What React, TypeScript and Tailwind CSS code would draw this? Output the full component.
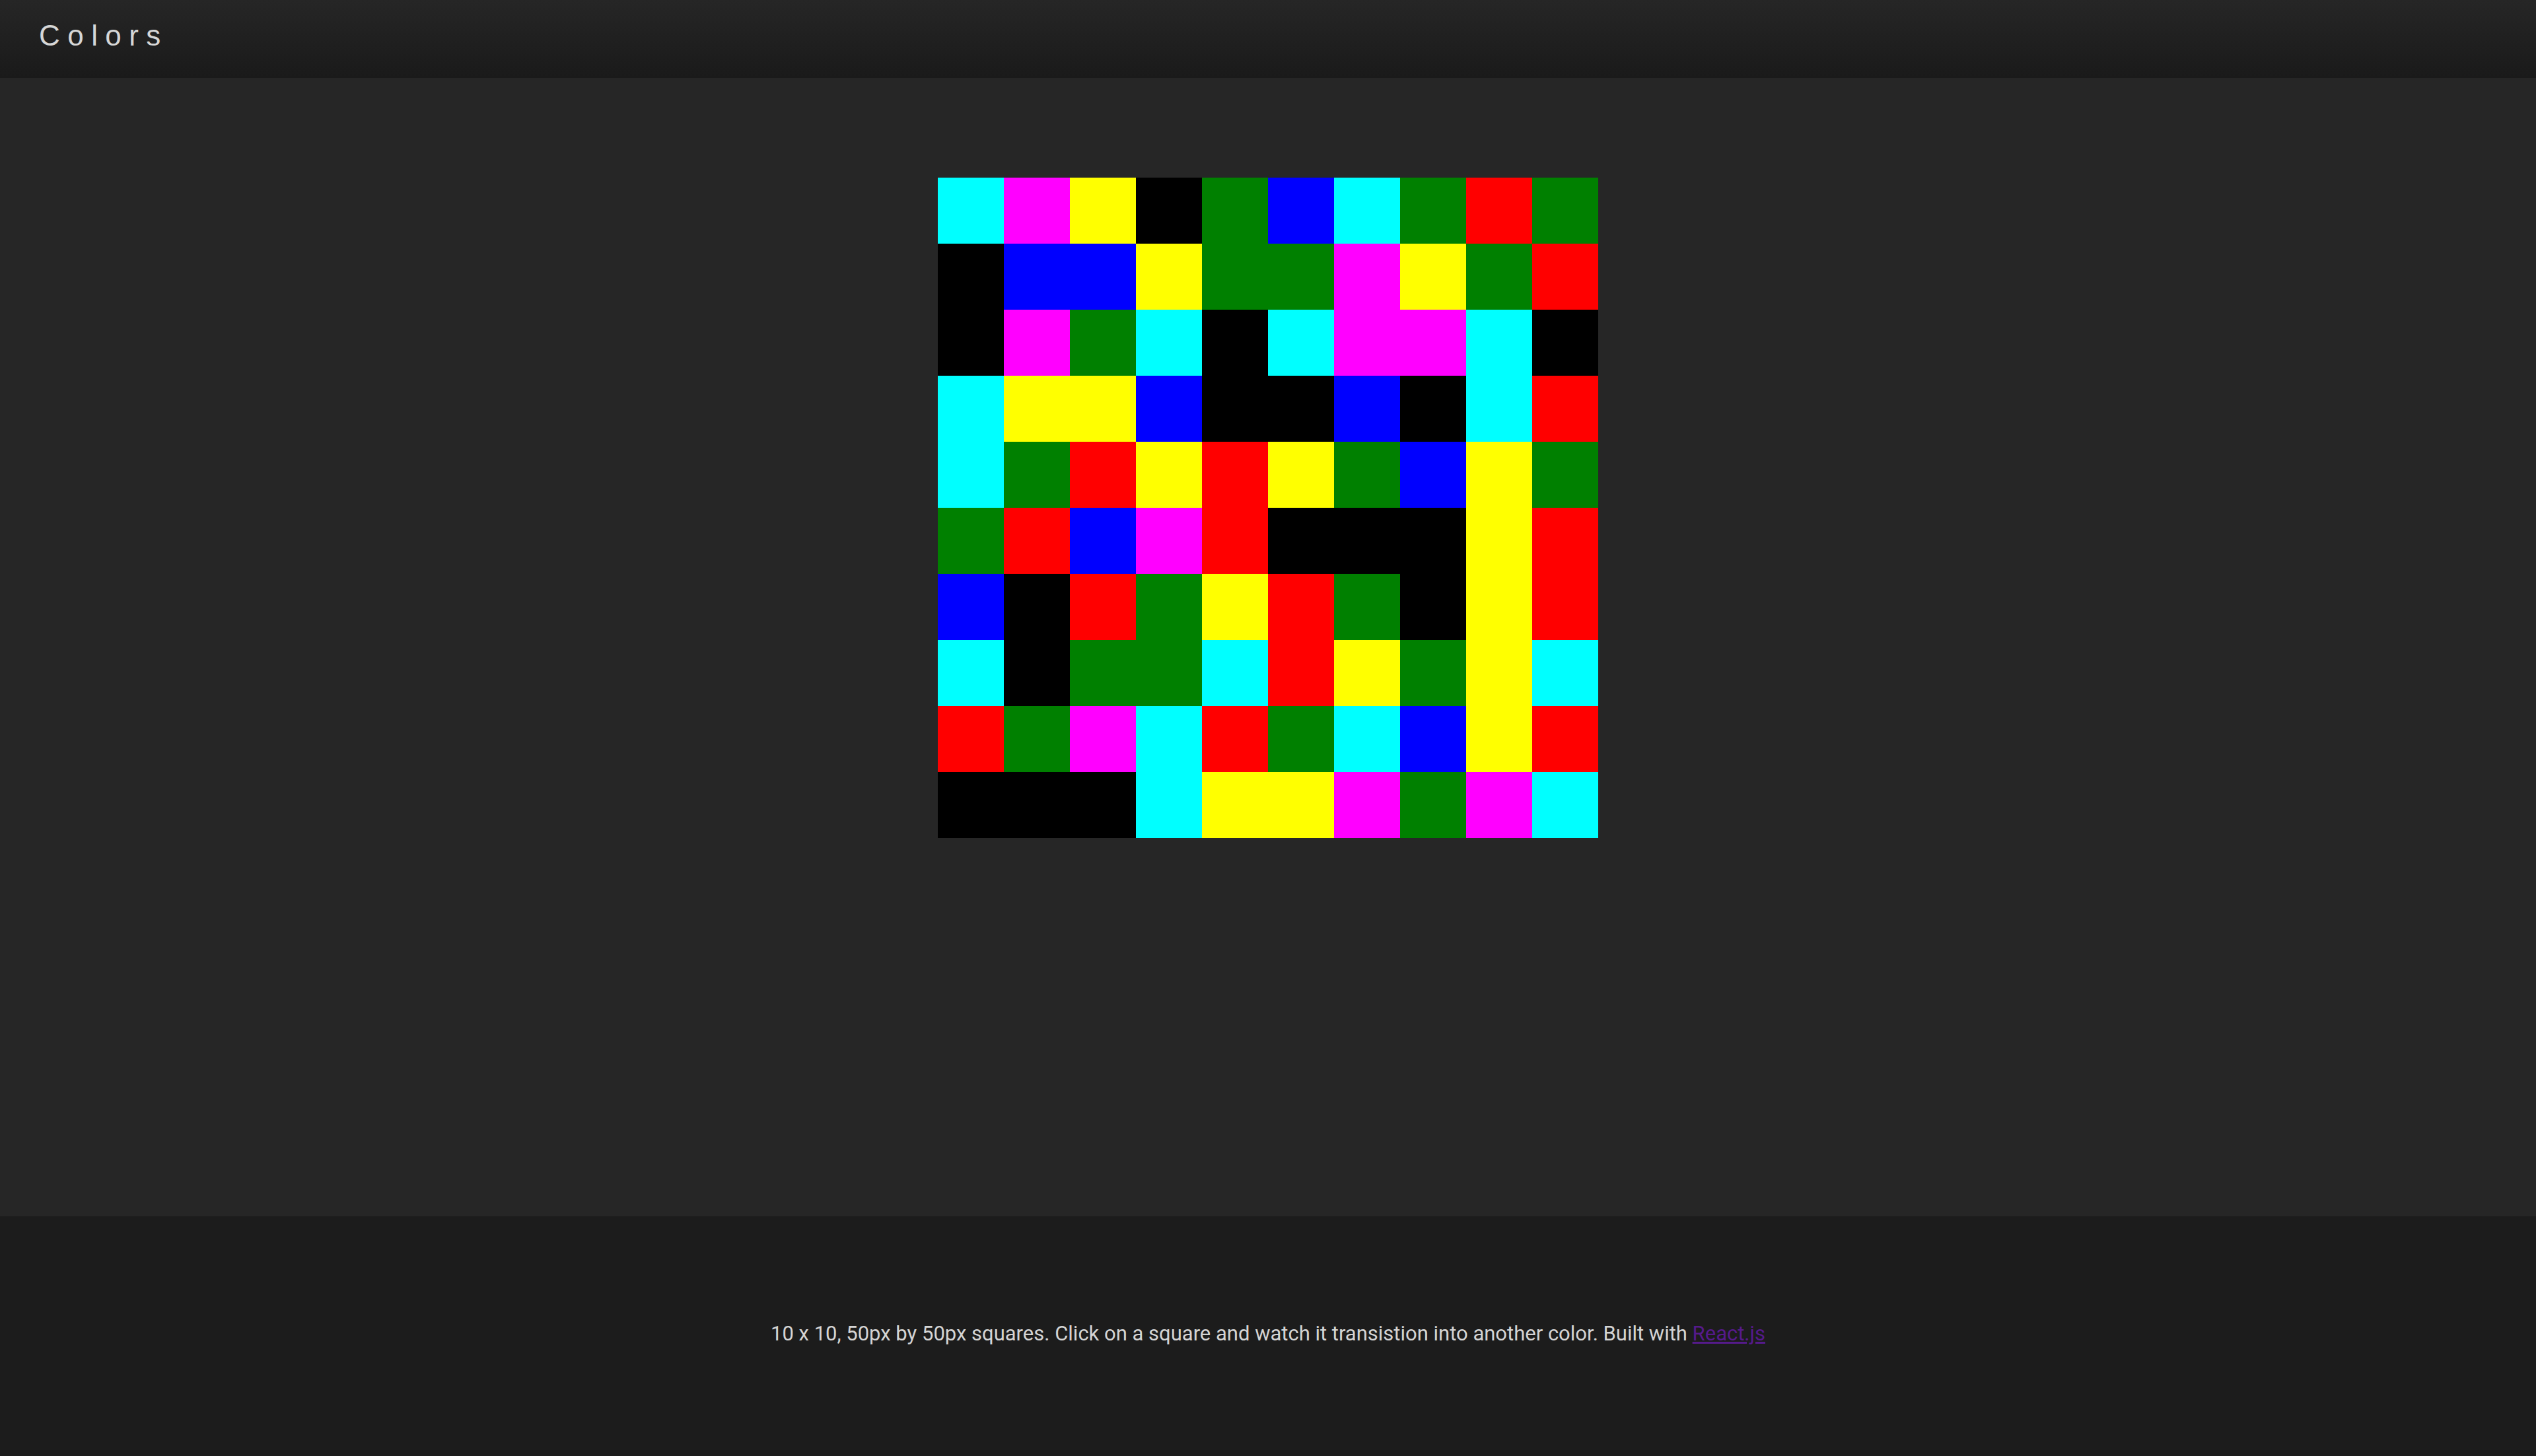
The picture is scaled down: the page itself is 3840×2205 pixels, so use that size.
import React from "react";

type Cell = "c" | "m" | "y" | "k" | "g" | "b" | "r";

const rows: string[] = [
  "cmykgbcgrg",
  "kbbyggmygr",
  "kmgckcmmck",
  "cyybkkbkcr",
  "cgryrygbyg",
  "grbmrkkkyr",
  "bkrgyrgkyr",
  "ckggcrygyc",
  "rgmcrgcbyr",
  "kkkcyymgmc",
];

const swatch: Record<Cell, string> = {
  c: "bg-[#00ffff]",
  m: "bg-[#ff00ff]",
  y: "bg-[#ffff00]",
  k: "bg-[#000000]",
  g: "bg-[#008000]",
  b: "bg-[#0000ff]",
  r: "bg-[#ff0000]",
};

const Square = ({ color }: { color: Cell }): React.ReactElement => {
  return <div className={`h-[100px] w-[100px] ${swatch[color]}`}></div>;
};

const App = (): React.ReactElement => {
  return (
    <div className="min-h-screen bg-[#262626]">
      <header className="flex h-[118px] items-center bg-gradient-to-b from-[#262626] to-[#1a1a1a] pb-[10px] pl-[59px]">
        <h1
          className="text-[44px] font-normal tracking-[0.26em] text-[#d6d6d6]"
          style={{ fontFamily: '"Liberation Sans", Arial, sans-serif' }}
        >
          Colors
        </h1>
      </header>

      <main className="flex h-[1724px] justify-center pt-[151px]">
        <div className="grid h-[1000px] w-[1000px] grid-cols-10">
          {rows.map((row, i) =>
            row
              .split("")
              .map((ch, j) => <Square key={`${i}-${j}`} color={ch as Cell} />)
          )}
        </div>
      </main>

      <footer className="flex h-[363px] items-center justify-center bg-[#1c1c1c] pb-[6px]">
        <p
          className="text-[31px] text-[#d4d4d4]"
          style={{ fontFamily: "Roboto, sans-serif" }}
        >
          10 x 10, 50px by 50px squares. Click on a square and watch it
          transistion into another color. Built with{" "}
          <a href="#" className="text-[#551a8b] underline">
            React.js
          </a>
        </p>
      </footer>
    </div>
  );
};

export default App;
